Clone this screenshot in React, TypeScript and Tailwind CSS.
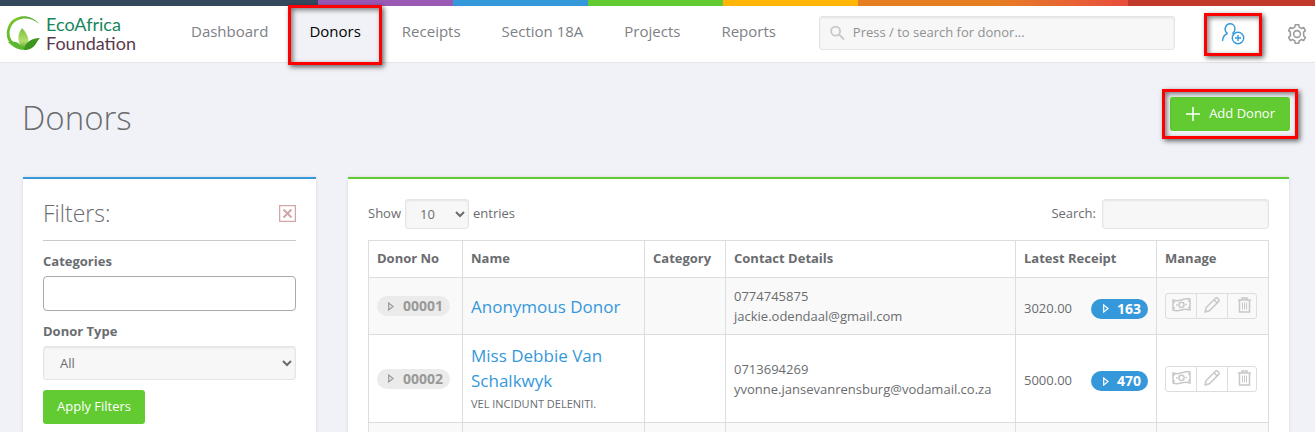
const navItems = ["Dashboard", "Donors", "Receipts", "Section 18A", "Projects", "Reports"];

const stripes = [
  "bg-[#9b59b6]",
  "bg-[#3498db]",
  "bg-[#62cb31]",
  "bg-[#ffb606]",
  "bg-[#e67e22]",
  "bg-linear-to-r from-[#e67e22] to-[#e74c3c]",
];

const donors = [
  {
    no: "00001",
    name: "Anonymous Donor",
    note: "",
    phone: "0774745875",
    email: "jackie.odendaal@gmail.com",
    amount: "3020.00",
    receipt: "163",
  },
  {
    no: "00002",
    name: "Miss Debbie Van Schalkwyk",
    note: "VEL INCIDUNT DELENITI.",
    phone: "0713694269",
    email: "yvonne.jansevanrensburg@vodamail.co.za",
    amount: "5000.00",
    receipt: "470",
  },
];

const field =
  "rounded-[3px] border border-[#e4e5e7] bg-[#f7f7f7] shadow-[inset_0_1px_2px_rgba(0,0,0,0.08)] outline-none";

function Highlight({ className }: { className: string }) {
  return (
    <span
      className={`pointer-events-none absolute border-3 border-[#ff0000] shadow-[2px_2px_5px_rgba(0,0,0,0.6),inset_2px_2px_5px_rgba(0,0,0,0.5)] ${className}`}
    />
  );
}

function Logo() {
  return (
    <a href="#" className="flex w-[164px] items-center gap-[6px] pl-[6px]">
      <svg width="34" height="38" viewBox="0 0 34 38">
        <defs>
          <linearGradient id="ring" x1="0" y1="1" x2="1" y2="0">
            <stop offset="0" stopColor="#5cb82c" />
            <stop offset="0.6" stopColor="#7cc62c" />
            <stop offset="1" stopColor="#3f9a3a" />
          </linearGradient>
          <linearGradient id="leaf" x1="0" y1="0" x2="0" y2="1">
            <stop offset="0" stopColor="#7cc43c" />
            <stop offset="0.6" stopColor="#b4dc6c" />
            <stop offset="1" stopColor="#3f9d1e" />
          </linearGradient>
        </defs>
        <path d="M33 9C25-1 11-1 4 8C-1 16 0 25 5 29L8 28C3 23 2 17 6 10C12 2 24 1 33 9Z" fill="url(#ring)" />
        <path d="M18 35C12 29 10 21 16 13C23 20 25 28 18 35Z" fill="url(#leaf)" />
        <path d="M18 35C11 35 6 31 2 27C9 25 15 28 18 35Z" fill="#5cb82c" />
        <path d="M18 35C19 27 26 23 34 23C30 27 29 35 18 35Z" fill="#3c961d" />
      </svg>
      <span className="font-[Lato,sans-serif] text-lg leading-[19px] text-[#5b3a4d]">
        <span className="block text-[#16875c]">EcoAfrica</span>
        Foundation
      </span>
    </a>
  );
}

function UserPlusIcon() {
  return (
    <svg width="24" height="24" viewBox="0 0 24 24" fill="none" stroke="#3498db" strokeWidth="1.4">
      <path d="M6.5 11.5C4.5 10 3.8 8 4.2 6C5 3 7 1.7 9.2 1.7S13.8 3.5 14 6.5C14 8.5 13.3 10.3 11.5 11.5" />
      <path d="M1.5 19C1.8 15 3.5 12.5 6.5 11.5M11.5 11.5L13 12.5" />
      <circle cx="17" cy="16" r="5.7" />
      <path d="M17 13v6M14 16h6" />
    </svg>
  );
}

function GearIcon() {
  return (
    <svg width="22" height="22" viewBox="0 0 24 24" fill="none" stroke="#9a9b9e" strokeWidth="1.7" strokeLinejoin="round">
      <path d="M9.6 4.5L10 2h4l.4 2.5 2.3 1.4 2.5-1 2 3.4-2 1.7v4l2 1.7-2 3.4-2.5-1-2.3 1.4L14 22h-4l-.4-2.5-2.3-1.4-2.5 1-2-3.4 2-1.7v-4l-2-1.7 2-3.4 2.5 1z" />
      <circle cx="12" cy="12" r="3.7" />
    </svg>
  );
}

function Triangle({ className }: { className: string }) {
  return (
    <svg width="6" height="9" viewBox="0 0 6 9" fill="none" stroke="currentColor" className={className}>
      <path d="M.7 1v7L5 4.5z" strokeWidth="1.2" />
    </svg>
  );
}

function MoneyIcon() {
  return (
    <svg width="19" height="14" viewBox="0 0 19 14" fill="none" stroke="currentColor" strokeWidth="1.5">
      <path d="M1 2C4 3 6 3 9 2S15 0 18 1v11c-3-1-6-1-9 0s-5 1-8 0z" />
      <circle cx="9.5" cy="6.8" r="2.6" />
      <path d="M4 7h1.5M13.5 6.5H15M1 4h2M16 3h2M1 10h2M16 9.5h2" />
    </svg>
  );
}

function PencilIcon() {
  return (
    <svg width="16" height="16" viewBox="0 0 16 16" fill="none" stroke="currentColor" strokeWidth="1.5" strokeLinejoin="round">
      <path d="M1 15l1.2-4.5L11.5 1.2c.6-.6 1.5-.5 2 0l1.2 1.2c.5.6.5 1.4 0 2L5.5 13.7zM10 2.7L13.2 6" />
    </svg>
  );
}

function TrashIcon() {
  return (
    <svg width="13" height="16" viewBox="0 0 13 16" fill="none" stroke="currentColor" strokeWidth="1.5">
      <path d="M0 3h13M4 3V1h5v2M1.5 3v12h10V3" />
      <path d="M4.5 5.5v7M6.5 5.5v7M8.5 5.5v7" strokeWidth="1" />
    </svg>
  );
}

function Header() {
  return (
    <header>
      <div className="flex h-[6px]">
        <div className="w-[318px] bg-[#34495e]" />
        {stripes.map((color) => (
          <div key={color} className={`w-[135px] ${color}`} />
        ))}
        <div className="flex-1 bg-[#c0392b]" />
      </div>
      <div className="flex h-[57px] items-stretch border-b border-[#e4e5e7] bg-white">
        <Logo />
        <nav className="ml-[7px] flex gap-px text-[15px] text-[#7d8186]">
          {navItems.map((item) => (
            <a
              key={item}
              href="#"
              className={`relative flex items-center px-5 pb-[6px] whitespace-nowrap ${
                item === "Donors" ? "bg-[#f1f2f7] text-black" : ""
              }`}
            >
              {item}
              {item === "Donors" && <Highlight className="-inset-x-px -top-px -bottom-[3px]" />}
            </a>
          ))}
        </nav>
        <label className={`my-[10px] ml-[23px] flex h-[34px] flex-1 items-center gap-2 px-[10px] ${field}`}>
          <svg width="16" height="16" viewBox="0 0 16 16" fill="none" stroke="#c9c9c9" strokeWidth="2">
            <circle cx="6" cy="6" r="4.8" />
            <path d="M9.5 9.5L15 15" />
          </svg>
          <input
            type="text"
            aria-label="Search for donor"
            placeholder="Press / to search for donor..."
            className="w-full text-[13px] outline-none placeholder:text-[#8f9194]"
          />
        </label>
        <div className="flex items-center gap-[41px] pr-[7px] pl-[46px]">
          <button aria-label="New donor" className="relative">
            <UserPlusIcon />
            <Highlight className="-inset-x-[17px] -top-[9px] -bottom-[10px]" />
          </button>
          <button aria-label="Settings">
            <GearIcon />
          </button>
        </div>
      </div>
    </header>
  );
}

function Filters() {
  return (
    <aside className="w-[293px] shrink-0 border-t-2 border-[#3498db] bg-white px-5 shadow-[0_0_3px_rgba(0,0,0,0.12)]">
      <div className="flex h-[62px] items-center justify-between border-b border-[#c8c9cb] pt-[8px]">
        <h2 className="text-[23px] font-light">Filters:</h2>
        <button aria-label="Clear filters">
          <svg width="17" height="17" viewBox="0 0 17 17" fill="none" stroke="#d2a6a6">
            <path d="M.5.5h16v16H.5z" strokeWidth="1.5" />
            <path d="M4.5 4.5l8 8M12.5 4.5l-8 8" strokeWidth="2" />
          </svg>
        </button>
      </div>
      <label htmlFor="categories" className="mt-[10px] mb-[5px] block leading-5 font-bold">
        Categories
      </label>
      <input id="categories" type="text" className="block h-[35px] w-full rounded border border-[#aaa] px-2 outline-none" />
      <label htmlFor="donor-type" className="mt-[10px] mb-[5px] block leading-5 font-bold">
        Donor Type
      </label>
      <select id="donor-type" className={`h-[34px] w-full px-3 ${field}`}>
        <option>All</option>
      </select>
      <button className="mt-[10px] h-[34px] rounded-[3px] bg-[#62cb31] px-[14px] text-white">Apply Filters</button>
    </aside>
  );
}

function DonorTable() {
  const cell = "border border-[#ddd] px-2";
  return (
    <table className="mt-[11px] w-full table-fixed border-collapse text-left">
      <colgroup>
        <col className="w-[94px]" />
        <col className="w-[182px]" />
        <col className="w-[81px]" />
        <col />
        <col className="w-[141px]" />
        <col className="w-[112px]" />
      </colgroup>
      <thead>
        <tr className="h-[37px]">
          {["Donor No", "Name", "Category", "Contact Details", "Latest Receipt", "Manage"].map((title) => (
            <th key={title} className={`whitespace-nowrap ${cell}`}>
              {title}
            </th>
          ))}
        </tr>
      </thead>
      <tbody>
        {donors.map((donor) => (
          <tr key={donor.no} className="odd:bg-[#f9f9f9]">
            <td className={cell}>
              <span className="flex h-5 w-[73px] items-center rounded-full bg-[#ebebeb] pl-[11px] text-sm font-bold text-[#999]">
                <Triangle className="mr-[9px]" />
                {donor.no}
              </span>
            </td>
            <td className={`py-2 ${cell}`}>
              <a href="#" className="block text-[17px] leading-[25px] text-[#3498db]">
                {donor.name}
              </a>
              {donor.note && <small className="block text-[11px] leading-[21px] whitespace-nowrap">{donor.note}</small>}
            </td>
            <td className={cell} />
            <td className={`py-2 leading-5 ${cell}`}>
              <div>{donor.phone}</div>
              <div>{donor.email}</div>
            </td>
            <td className={cell}>
              <div className="flex items-center justify-between pt-[5px]">
                {donor.amount}
                <a
                  href="#"
                  className="flex h-5 w-[57px] items-center rounded-full bg-[#3498db] pl-[12px] text-sm font-bold text-white"
                >
                  <Triangle className="mr-[8px]" />
                  {donor.receipt}
                </a>
              </div>
            </td>
            <td className={cell}>
              <div className="flex h-[26px] w-[92px] divide-x divide-[#ddd] rounded-[3px] border border-[#ddd] text-[#c8c8c8]">
                <button aria-label="Add receipt" className="flex w-[31px] shrink-0 justify-center pt-1">
                  <MoneyIcon />
                </button>
                <button aria-label="Edit donor" className="flex w-[31px] shrink-0 justify-center pt-[3px]">
                  <PencilIcon />
                </button>
                <button aria-label="Delete donor" className="flex flex-1 justify-center pt-[3px] pl-1">
                  <TrashIcon />
                </button>
              </div>
            </td>
          </tr>
        ))}
        <tr className="h-[57px] odd:bg-[#f9f9f9]">
          {[1, 2, 3, 4, 5, 6].map((n) => (
            <td key={n} className={cell} />
          ))}
        </tr>
      </tbody>
    </table>
  );
}

export default function App() {
  return (
    <div className="flex h-screen flex-col overflow-hidden bg-[#f1f2f7] font-['Open_Sans',sans-serif] text-[13px] text-[#6a6c6f]">
      <Header />
      <div className="flex h-[114px] shrink-0 items-center justify-between pr-[25px] pb-[4px] pl-[22px]">
        <h1 className="text-[33px] font-light">Donors</h1>
        <button className="relative mb-[8px] flex h-[34px] items-center gap-2 rounded-[3px] bg-[#62cb31] px-[15px] text-white">
          <svg width="16" height="16" viewBox="0 0 16 16" stroke="currentColor" strokeWidth="1.5">
            <path d="M8 1v14M1 8h14" />
          </svg>
          Add Donor
          <Highlight className="-inset-x-[8px] -inset-y-[8px]" />
        </button>
      </div>
      <main className="flex flex-1 items-stretch gap-8 pr-[26px] pl-[23px]">
        <Filters />
        <section className="min-w-0 flex-1 border-t-2 border-[#62cb31] bg-white px-5 pt-5 shadow-[0_0_3px_rgba(0,0,0,0.12)]">
          <div className="flex items-center justify-between">
            <label className="flex items-center gap-1">
              Show
              <select className={`h-[30px] w-16 px-[10px] ${field}`}>
                <option>10</option>
              </select>
              entries
            </label>
            <label className="flex items-center gap-[6px]">
              Search:
              <input type="search" className={`h-[30px] w-[167px] px-2 ${field}`} />
            </label>
          </div>
          <DonorTable />
        </section>
      </main>
    </div>
  );
}
